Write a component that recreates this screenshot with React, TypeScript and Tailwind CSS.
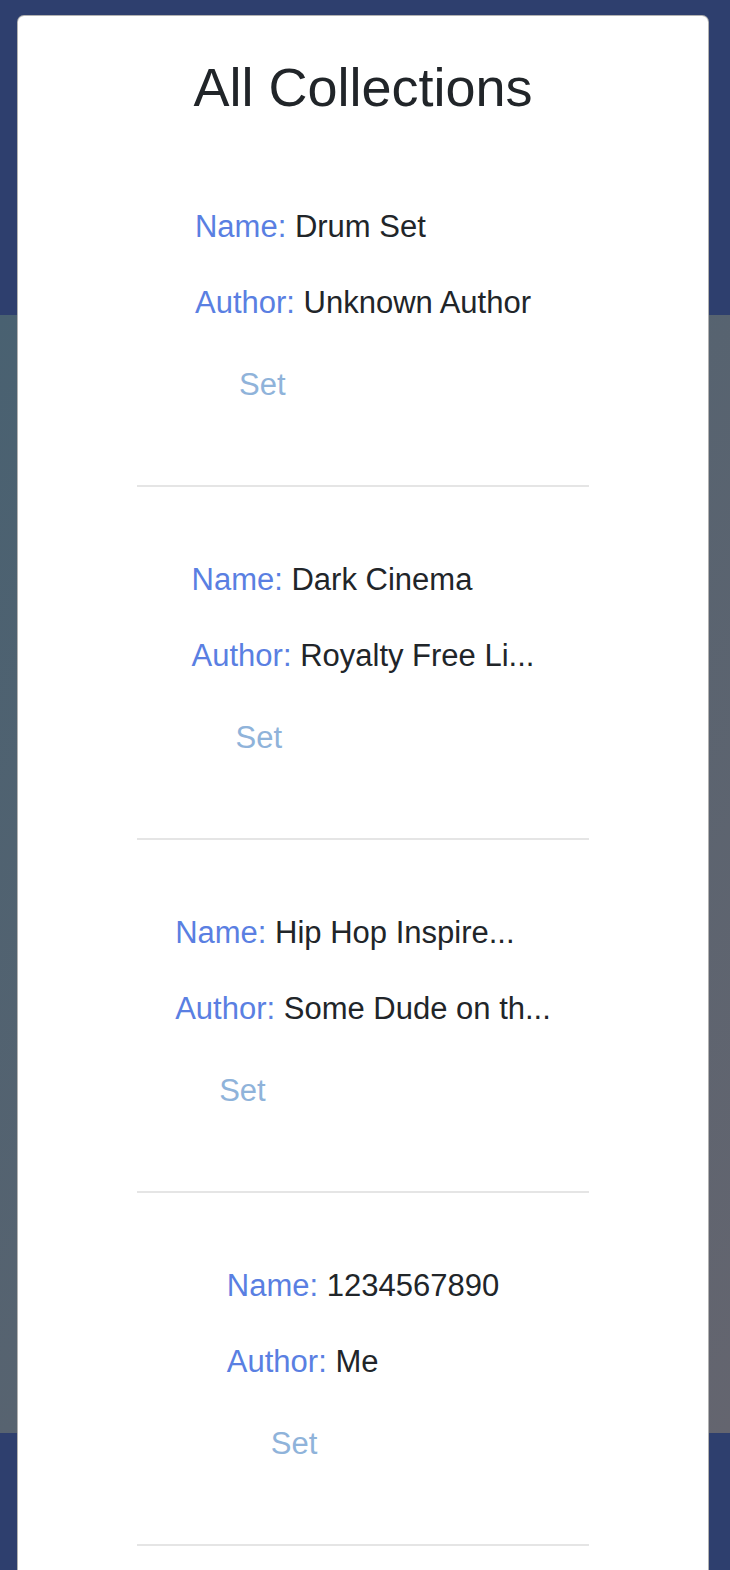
const collections = [
  { name: 'Drum Set', author: 'Unknown Author' },
  { name: 'Dark Cinema', author: 'Royalty Free Li...' },
  { name: 'Hip Hop Inspire...', author: 'Some Dude on th...' },
  { name: '1234567890', author: 'Me' },
];

export default function App() {
  return (
    <div
      className="relative h-[1570px] w-full overflow-hidden"
      style={{ fontFamily: '"Liberation Sans", Arial, sans-serif' }}
    >
      {/* page behind the modal backdrop */}
      <div className="flex h-full flex-col">
        <div className="h-[315px] bg-[#2e3f6e]" />
        <div className="flex-1 bg-gradient-to-br from-[#496171] to-[#64656f]" />
        <div className="h-[137px] bg-[#2e3f6e]" />
      </div>

      <div className="absolute top-[15px] bottom-[-20px] left-[17px] right-[21px] rounded-[7px] border border-black/30 bg-white">
        <h1 className="pt-[39px] text-center text-[54px] leading-[65px] text-[#212529]">
          All Collections
        </h1>

        <div className="mt-[85px] flex flex-col">
          {collections.map(({ name, author }) => (
            <div key={name} className="flex flex-col">
              <div className="flex justify-center">
                <div className="text-left text-[31px] leading-[44px]">
                  <p>
                    <span className="text-[#5a7fe2]">Name:</span>{' '}
                    <span className="text-[#212529]">{name}</span>
                  </p>
                  <p className="mt-[32px]">
                    <span className="text-[#5a7fe2]">Author:</span>{' '}
                    <span className="text-[#212529]">{author}</span>
                  </p>
                  <button className="mt-[38px] pl-[44px] text-[#8fb3da]">
                    Set
                  </button>
                </div>
              </div>
              <hr className="mx-[119px] mt-[78px] mb-[71px] border-t-2 border-[#e5e5e5]" />
            </div>
          ))}
        </div>
      </div>
    </div>
  );
}
